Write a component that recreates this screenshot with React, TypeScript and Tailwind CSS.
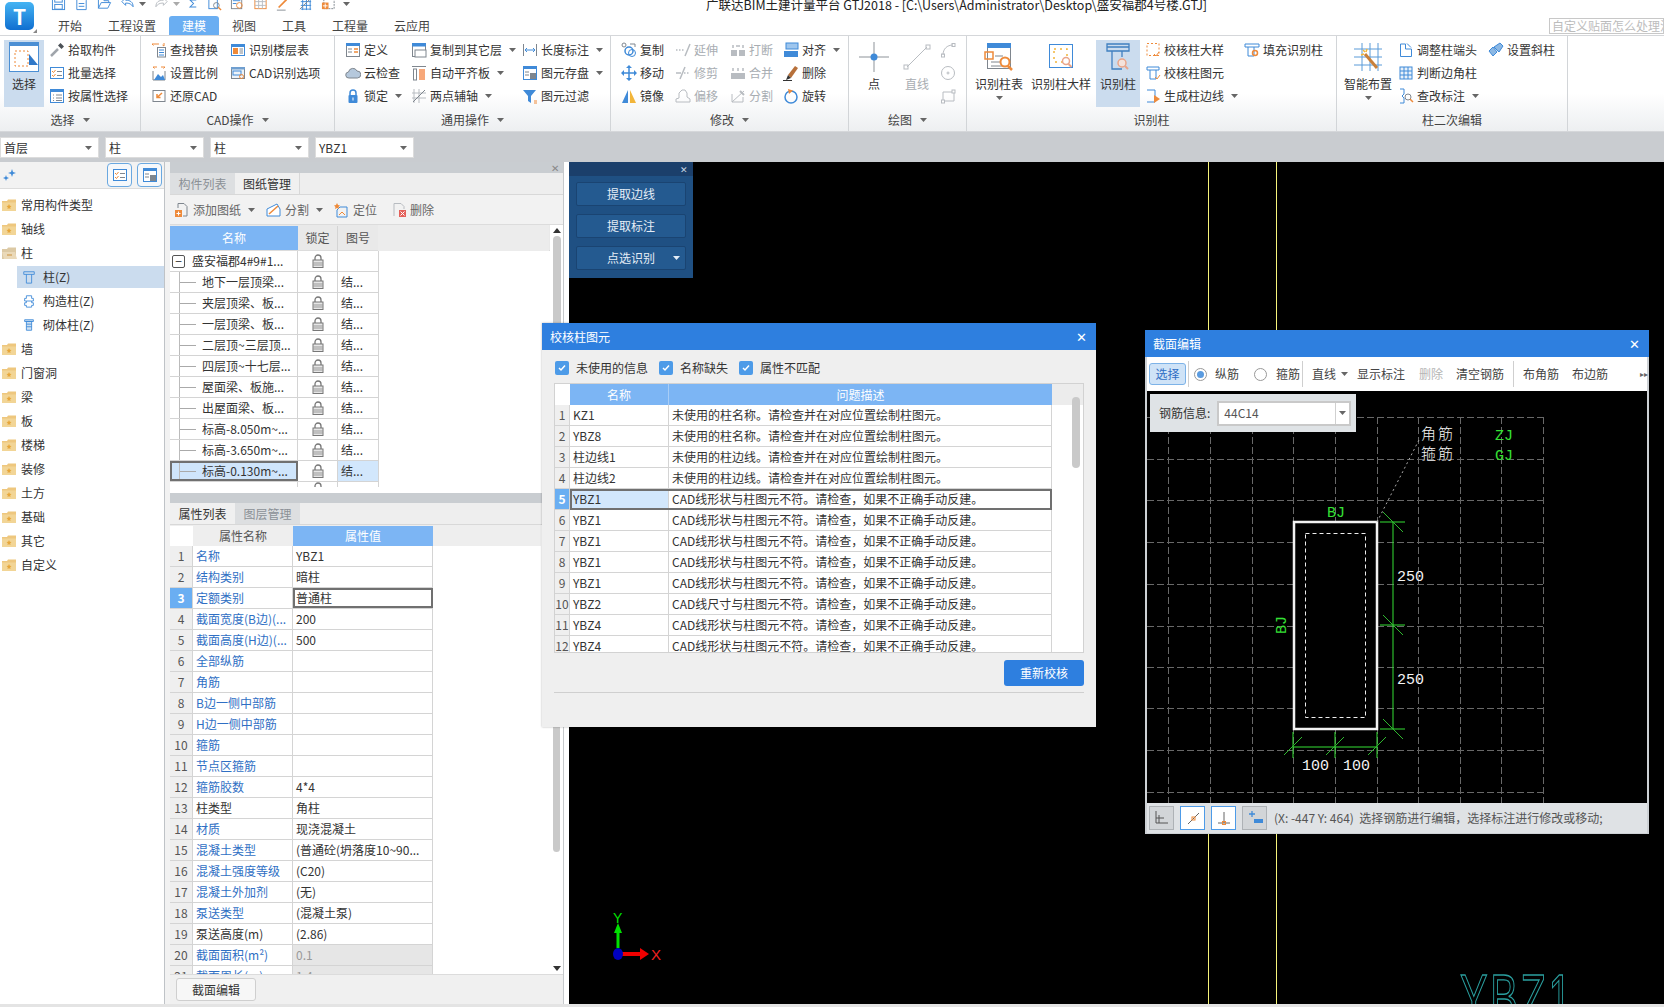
import React from "react";

const B = "#3f8ad8";
const O = "#ee8a3a";
const G = "#7f868e";
const L = "#b8bcc1";
const Y = "#f2b53a";

const icons: Record<string, React.ReactNode> = {
  save: <><rect x="1.5" y="1.5" width="13" height="13" stroke={B} /><rect x="4" y="1.5" width="8" height="5" stroke={B} /><rect x="4" y="9" width="8" height="5" stroke={B} /></>,
  page: <><path d="M3 1.5h7l3 3v10H3z" stroke={B} /><path d="M5 8h6M5 11h6" stroke={B} /></>,
  open: <><path d="M1.5 13V3h5l1 2h5v2" stroke={B} /><path d="M1.5 13l3-6h10l-3 6z" stroke={B} /></>,
  undo: <path d="M2 6l4-4v2.500c5 0 8 2 8 7-2-3-4-4-8-4V10z" stroke={B} />,
  redo: <path d="M14 6l-4-4v2.500c-5 0-8 2-8 7 2-3 4-4 8-4V10z" stroke={L} />,
  sum: <path d="M12 3H3l5 5-5 5h9" stroke={B} strokeWidth="1.500" />,
  q1: <><rect x="2" y="1.500" width="9" height="12" stroke={B} /><circle cx="10" cy="10" r="3" stroke={G} /><path d="M12 12l3 3" stroke={O} strokeWidth="1.500" /></>,
  q2: <><rect x="1.500" y="1.500" width="11" height="12" stroke={G} /><path d="M3 5h8M3 8h4" stroke={B} /><circle cx="10" cy="10" r="3" stroke={O} /></>,
  q3: <><rect x="2" y="1.500" width="12" height="12" stroke={O} /><path d="M2 6h12M2 10h12M6 1.500v12M10 1.500v12" stroke={L} /></>,
  q4: <><path d="M3 12L12 3" stroke={O} strokeWidth="2" /><path d="M1 15h10" stroke={G} /></>,
  q5: <><path d="M3 2h11M3 6h11M3 10h11M3 14h11M5 1v14M9 1v14M13 1v14" stroke={B} /><path d="M2 14L14 2" stroke={G} /></>,
  q6: <><rect x="3" y="1.500" width="11" height="12" stroke={G} strokeDasharray="2 1" /><rect x="1" y="7" width="7" height="7" fill={O} /><path d="M4.500 8v5M2 10.500h5" stroke="#fff" /></>,
  pick: <><path d="M2 14l7-7" stroke="#a0a5ab" strokeWidth="2.500" /><path d="M9 3.500l3.500 3.500L15 4.500 11.500 1z" fill="#4c5157" /></>,
  batch: <><rect x="1.500" y="2.500" width="13" height="11" fill="#fff" stroke={B} /><path d="M3 6l1.500 1.500 2-2.500M3 10l1.500 1.500 2-2.500" stroke={O} /><path d="M8 6.500h5M8 10.500h5" stroke={G} /></>,
  attr: <><rect x="1.500" y="1.500" width="13" height="13" fill="#fff" stroke={B} /><rect x="1" y="1" width="14" height="3" fill={B} /><path d="M4 7h1M7 7h6M4 10h1M7 10h6M4 12.500h1M7 12.500h6" stroke={G} /></>,
  find: <><path d="M1 2h7M1 2l1.500 1.500M13 1v3l-1.500-1" stroke={O} /><rect x="6.500" y="5.500" width="8" height="9.500" fill="#fff" stroke={G} /><path d="M8 8h5M8 10.500h5M8 13h5" stroke={B} /></>,
  floor: <><rect x="1.500" y="2.500" width="13" height="11" fill="#fff" stroke={B} /><rect x="1" y="2" width="14" height="3" fill={B} /><rect x="3" y="6" width="5" height="6" fill={O} /><path d="M9.500 7h3.500M9.500 9h3.500M9.500 11h3.500" stroke={G} /></>,
  scale: <><path d="M2 6v9h12V6" stroke={G} /><path d="M3 15l4-6 3 3 2-2 2 5z" fill={B} /><path d="M2 2h4M10 2h4M2 2l1.500 1.500M14 2l-1.500 1.500" stroke={O} /></>,
  cadopt: <><rect x="1.500" y="2.500" width="13" height="11" fill="#eef3f8" stroke={G} /><rect x="1" y="2" width="14" height="2.500" fill="#6f9fd0" /><rect x="3" y="6" width="8" height="4" stroke={B} /><circle cx="11.500" cy="11.500" r="2" stroke={O} /></>,
  restore: <><rect x="2" y="2.500" width="12" height="11" fill="#fff" stroke={G} /><path d="M11 5L6 9.500M6 6v3.500h3.500" stroke={O} strokeWidth="1.500" /></>,
  define: <><rect x="1.500" y="1.500" width="13" height="13" fill="#fff" stroke={G} /><rect x="1" y="1" width="14" height="3" fill={B} /><path d="M3 7h4M3 10h4" stroke={G} /><path d="M9 7h4M9 10h4" stroke={O} strokeWidth="1.500" /></>,
  cloud: <><path d="M4 13a3 3 0 0 1-.5-6 4.500 4.500 0 0 1 8.500-1 3.500 3.500 0 0 1 .5 7z" fill="#b5c8dc" stroke={G} /></>,
  lock: <><path d="M5 7V5a3 3 0 0 1 6 0v2" stroke={B} strokeWidth="1.500" /><rect x="3.500" y="7" width="9" height="8" rx="1" fill={B} /><rect x="7.500" y="9.500" width="1" height="3" fill="#fff" /></>,
  copyfloor: <><rect x="1.500" y="1.500" width="13" height="13" fill="#fff" stroke={G} /><rect x="1" y="1" width="14" height="3.500" fill={B} /><rect x="4" y="8" width="11" height="7" fill="#fff" stroke={G} /></>,
  align2: <><path d="M1 1.500h14" stroke={G} /><rect x="2.500" y="4" width="3" height="11" stroke={G} /><rect x="8" y="4" width="6" height="11" fill="#f7a87a" /></>,
  twopoint: <><path d="M3 1v14M8 1v14M1 5h14M1 10h14" stroke={L} /><path d="M2 14L14 2" stroke={G} /></>,
  dim: <><path d="M1.500 2v12M14.500 2v12" stroke={G} /><path d="M3 8h10M3 8l2-2M3 8l2 2M13 8l-2-2M13 8l-2 2" stroke={B} /></>,
  store: <><rect x="1.500" y="1.500" width="13" height="13" fill="#fff" stroke={B} /><rect x="1" y="1" width="14" height="3" fill={B} /><path d="M3 7h4M3 10h4" stroke={G} /><rect x="8" y="8" width="6" height="6" fill={G} /></>,
  filter: <><path d="M1 2h13L9 8v7l-3-2V8z" fill={B} /><path d="M12 13h3M12 15h3" stroke={O} /></>,
  copy: <><circle cx="3" cy="3" r="2" stroke={G} /><circle cx="8" cy="9" r="4" stroke={B} strokeWidth="1.500" /><circle cx="11" cy="11" r="3.500" stroke={B} /><path d="M9 2h5v3" stroke={G} /></>,
  move: <><path d="M8 2v12M2 8h12" stroke={B} strokeWidth="1.500" /><path d="M8 0l3 3H5zM8 16l3-3H5zM0 8l3-3v6zM16 8l-3-3v6z" fill={B} /></>,
  mirror: <><path d="M7 2v13H1z" fill={B} /><path d="M9 2v13h6z" fill={Y} /></>,
  extend: <path d="M1 8h1.500M4 8h1.500M7 8h1.500M10 14l5-12" stroke={L} strokeWidth="1.500" />,
  trim: <path d="M1 8h5M9 8h1.500M12 8h1.500M5 14l5-12" stroke={L} strokeWidth="1.500" />,
  split1: <><rect x="1" y="8" width="6" height="6" fill={L} /><rect x="9" y="8" width="6" height="6" fill={L} /><path d="M3 3v3M13 3v3M6 4h4" stroke={L} strokeWidth="1.500" /></>,
  merge: <><rect x="1" y="8" width="14" height="6" fill={L} /><path d="M3 3v3M13 3v3M8 3v3" stroke={L} strokeWidth="1.500" /></>,
  offset: <path d="M1 14v-3l3-1V5l3-3h3l2 3v4l3 2v3z" stroke={L} />,
  split2: <><path d="M2 6v8h11V9" stroke={L} /><path d="M2 14l12-11" stroke={L} /><path d="M10 3l4 4" stroke={L} strokeWidth="2" /></>,
  align3: <><rect x="3" y="1" width="12" height="6" fill="#9ec6ee" stroke={B} /><rect x="1" y="9" width="14" height="6" fill={B} /></>,
  del: <><path d="M5 10l7-9 3 2-7 10z" fill="#b7703a" /><path d="M5 10l3 3-5 2z" fill="#333" /><path d="M0 15.500h9" stroke="#333" /></>,
  rotate: <><circle cx="8" cy="9" r="6" stroke={B} strokeWidth="1.500" /><path d="M5 1l5 1.500L6 6z" fill={O} /></>,
  col1: <><rect x="2" y="1.500" width="12" height="12" stroke={O} strokeDasharray="2 2" /><path d="M9 12l2 2 3-4" stroke={O} /></>,
  col2: <><path d="M2 2h12v3H2zM5 5v9h6V5" stroke={B} /><path d="M10 12l2 2 3-4" stroke={O} /></>,
  col3: <><path d="M2 2h8v12H2" stroke={B} /><path d="M9 7l6 4-6 4z" fill={O} /></>,
  col4: <><path d="M1 2h14v3H1zM4 5v9h6V5" stroke={B} /><circle cx="11" cy="11" r="2.500" stroke={O} strokeWidth="1.500" /></>,
  end: <path d="M2.500 2h5v5h6v7.500h-11z M9 1.500l4 4" stroke={B} />,
  corner: <><rect x="2" y="2" width="12" height="12" fill="#e8f1fa" stroke={B} /><path d="M2 6h12M2 10h12M6 2v12M10 2v12" stroke={B} /></>,
  mark: <><path d="M2 1h4v5l-2 2 2 2v5H2" stroke={B} /><circle cx="10" cy="9" r="3" stroke={G} /><path d="M12 11l3 3" stroke={O} strokeWidth="1.500" /></>,
  tilt: <><path d="M1 9l4 5 4-4-4-5zM6 5l5 5 4-6-3-3z" fill="#8cb8e4" stroke={B} /></>,
  arc: <><path d="M3 13C3 7 7 3 13 3" stroke={L} /><rect x="1.500" y="12" width="3" height="3" stroke={L} /><rect x="12" y="1.500" width="3" height="3" stroke={L} /></>,
  circle: <><circle cx="8" cy="8" r="6.500" stroke={L} /><circle cx="8" cy="8" r="1" stroke={L} /></>,
  rect: <><path d="M3 4h11v9H3z" stroke={L} /><rect x="12" y="2" width="3" height="3" fill="#fff" stroke={L} /><rect x="1.500" y="12" width="3" height="3" fill="#fff" stroke={L} /></>,
  add: <><path d="M4 6V1.500h6l3 3V14H9" stroke={G} /><rect x="1" y="8" width="7" height="7" fill={O} /><path d="M4.500 9.500v4M2.500 11.500h4" stroke="#fff" /></>,
  cut: <><path d="M1 7l10-5 3 5v7H1z" fill="#fff" stroke={B} /><path d="M3 12l9-8" stroke={O} strokeWidth="1.500" /></>,
  locate: <><path d="M6 5h7v10H3V8z" stroke={B} /><path d="M3 1l1 2 2 .500-1.500 1.500.500 2L3 6 1 7l.500-2L0 3.500 2 3z" fill={O} /><path d="M5 13l3-3 3 3" stroke={O} /></>,
  remove: <><path d="M3 14V1.500h7l3 3V7" stroke={L} /><rect x="8" y="8" width="7" height="7" fill="#e4605a" /><path d="M9.500 9.500l4 4M13.500 9.500l-4 4" stroke="#fff" /></>,
  c1: <path d="M2 2h12v3H2zM5 5v10h6V5" stroke={B} />,
  c2: <><path d="M5 2h6v3h2v3h-2v2h2v3h-2v2H5v-2H3v-3h2V8H3V5h2z" stroke={B} /><path d="M5 8h6" stroke={B} /></>,
  c3: <><path d="M3 2h10v2H3zM5 4v10h6V4z" fill="#cfe1f3" stroke={B} /><path d="M5 7h6M5 10h6" stroke={B} /></>,
  l1: <><path d="M2 1v12h12" stroke="#555" /><path d="M5 5v8M2 8h8" stroke="#555" /></>,
  l2: <><path d="M3 14L14 3" stroke="#666" /><rect x="7" y="7" width="3" height="3" stroke={O} /></>,
  l3: <><path d="M8 2v11M2 13h12" stroke="#666" /><rect x="6.500" y="11.500" width="3" height="3" stroke={O} /></>,
  l4: <><path d="M5 1v6M2 4h6" stroke={B} strokeWidth="1.300" /><rect x="7" y="9" width="9" height="4" fill={B} /></>,
};

const Ico = ({ n, s = 16 }: { n: string; s?: number }) => (
  <svg width={s} height={s} viewBox="0 0 16 16" fill="none" className="shrink-0">
    {icons[n]}
  </svg>
);

const Caret = ({ c = "#666" }: { c?: string }) => (
  <svg width="7" height="4" viewBox="0 0 7 4" className="shrink-0">
    <path d="M0 0h7L3.500 4z" fill={c} />
  </svg>
);

const Item = ({ n, t, caret, off }: { n: string; t: string; caret?: boolean; off?: boolean }) => (
  <div className={`flex h-[23px] items-center whitespace-nowrap ${off ? "text-[#a8adb2]" : "text-[#333]"}`}>
    <span className="w-[19px] shrink-0">
      <Ico n={n} />
    </span>
    {t}
    {caret && (
      <span className="ml-[7px]">
        <Caret />
      </span>
    )}
  </div>
);

const Group = ({ label, caret, className, children }: { label: string; caret?: boolean; className: string; children: React.ReactNode }) => (
  <div className={`flex shrink-0 flex-col border-r border-[#d2d5d8] ${className}`}>
    <div className="flex h-[71px] pt-[2px]">{children}</div>
    <div className="mt-[1px] flex h-[23px] items-center justify-center gap-[8px] text-[#444]">
      {label}
      {caret && <Caret />}
    </div>
  </div>
);

const Big = ({ t, className, active, caret, off, children }: { t: string; className: string; active?: boolean; caret?: boolean; off?: boolean; children: React.ReactNode }) => (
  <div className={`mt-[2px] flex h-[67px] shrink-0 flex-col items-center whitespace-nowrap pt-[2px] ${active ? "bg-[#cbdcee]" : ""} ${off ? "text-[#a8adb2]" : "text-[#333]"} ${className}`}>
    <div className="flex h-[30px] items-center">{children}</div>
    <div className="mt-[3px] h-[18px] leading-[18px]">{t}</div>
    {caret && (
      <div className="mt-[3px]">
        <Caret />
      </div>
    )}
  </div>
);

const Combo = ({ t }: { t: string }) => (
  <div className="flex h-[21px] w-[99px] items-center justify-between border border-[#dcdcdc] bg-white pl-[3px] pr-[6px] text-[#333]">
    {t}
    <Caret />
  </div>
);

const Folder = ({ open }: { open?: boolean }) => (
  <svg width="15" height="13" viewBox="0 0 15 13" className="shrink-0">
    <path d="M0 2h5l1-1.500h8V12H0z" fill={open ? "#dcc9a4" : "#eec77e"} />
    <path d={open ? "M0 5h13l2 7H2z" : "M0 3.500h14V12H0z"} fill={open ? "#ead9b9" : "#f2d596"} />
    {open ? <rect x="5" y="7.500" width="5" height="1" fill="#c98f3c" /> : <path d="M7 5l.8 1.700 1.700.3-1.300 1.200.3 1.800L7 9.200 5.500 10l.3-1.800L4.500 7l1.700-.3z" fill="#e6a63a" />}
  </svg>
);

const treeRows: { t: string; i?: string; sel?: boolean; open?: boolean }[] = [
  { t: "常用构件类型" },
  { t: "轴线" },
  { t: "柱", open: true },
  { t: "柱(Z)", i: "c1", sel: true },
  { t: "构造柱(Z)", i: "c2" },
  { t: "砌体柱(Z)", i: "c3" },
  { t: "墙" },
  { t: "门窗洞" },
  { t: "梁" },
  { t: "板" },
  { t: "楼梯" },
  { t: "装修" },
  { t: "土方" },
  { t: "基础" },
  { t: "其它" },
  { t: "自定义" },
];

const LockIcon = () => (
  <svg width="12" height="14" viewBox="0 0 12 14" fill="none">
    <path d="M3 6V4a3 3 0 0 1 6 0v2" stroke="#777" strokeWidth="1.300" />
    <rect x="1" y="6" width="10" height="7.500" fill="#e6e6e6" stroke="#777" />
    <path d="M1 9h10M1 11h10" stroke="#999" />
  </svg>
);

const drawings = [
  "地下一层顶梁...",
  "夹层顶梁、板...",
  "一层顶梁、板...",
  "二层顶~三层顶...",
  "四层顶~十七层...",
  "屋面梁、板施...",
  "出屋面梁、板...",
  "标高-8.050m~...",
  "标高-3.650m~...",
  "标高-0.130m~...",
];

const props: [string, string, boolean?][] = [
  ["名称", "YBZ1"],
  ["结构类别", "暗柱"],
  ["定额类别", "普通柱"],
  ["截面宽度(B边)(...", "200"],
  ["截面高度(H边)(...", "500"],
  ["全部纵筋", ""],
  ["角筋", ""],
  ["B边一侧中部筋", ""],
  ["H边一侧中部筋", ""],
  ["箍筋", ""],
  ["节点区箍筋", ""],
  ["箍筋胶数", "4*4"],
  ["柱类型", "角柱", true],
  ["材质", "现浇混凝土"],
  ["混凝土类型", "(普通砼(坍落度10~90..."],
  ["混凝土强度等级", "(C20)"],
  ["混凝土外加剂", "(无)"],
  ["泵送类型", "(混凝土泵)"],
  ["泵送高度(m)", "(2.86)", true],
  ["截面面积(m²)", "0.1"],
  ["截面周长(m)", "1.4"],
];

const shape = "CAD线形状与柱图元不符。请检查，如果不正确手动反建。";
const unusedName = "未使用的柱名称。请检查并在对应位置绘制柱图元。";
const unusedLine = "未使用的柱边线。请检查并在对应位置绘制柱图元。";
const checks: [string, string][] = [
  ["KZ1", unusedName],
  ["YBZ8", unusedName],
  ["柱边线1", unusedLine],
  ["柱边线2", unusedLine],
  ["YBZ1", shape],
  ["YBZ1", shape],
  ["YBZ1", shape],
  ["YBZ1", shape],
  ["YBZ1", shape],
  ["YBZ2", "CAD线尺寸与柱图元不符。请检查，如果不正确手动反建。"],
  ["YBZ4", shape],
  ["YBZ4", shape],
];

const Check = ({ t, className }: { t: string; className: string }) => (
  <div className={`flex items-center gap-[7px] ${className}`}>
    <span className="flex h-[14px] w-[14px] items-center justify-center rounded-[2px] bg-[#4d9be8]">
      <svg width="10" height="10" viewBox="0 0 10 10" fill="none">
        <path d="M2 5l2 2 4-4.500" stroke="#fff" strokeWidth="1.500" />
      </svg>
    </span>
    {t}
  </div>
);

const gridX = [1168, 1210, 1252, 1293, 1335, 1377, 1418, 1460, 1501, 1543];
const gridY = [417, 459, 500, 542, 584, 626, 667, 708, 750, 792];

const SectionDrawing = () => {
  const green = "#35e035";
  const slash = (x: number, y: number, d = 13) => (
    <path d={`M${x - d} ${y - d}L${x + d} ${y + d}`} stroke="#2fb82f" />
  );
  const slash2 = (x: number, y: number, d = 13) => (
    <path d={`M${x - d} ${y + d}L${x + d} ${y - d}`} stroke="#2fb82f" />
  );
  return (
    <svg width="500" height="412" viewBox="1147 391 500 412" className="absolute inset-0">
      {gridX.map((x) => (
        <path key={x} d={`M${x}.5 417V803`} stroke="#686868" strokeDasharray="7 3" />
      ))}
      {gridY.map((y) => (
        <path key={y} d={`M1147 ${y}.5H1543`} stroke="#686868" strokeDasharray="7 3" />
      ))}
      <rect x="1294" y="522" width="83" height="207" stroke="#f2f2f2" strokeWidth="2.500" />
      <rect x="1305.500" y="533.500" width="60" height="184" stroke="#eee" strokeDasharray="4 3" />
      <path d="M1377 522L1420 438" stroke="#aaa" strokeDasharray="2 3" />
      <path d="M1393 522V729M1380 522H1405M1380 625H1405M1380 729H1405" stroke={green} />
      {slash(1393, 522, 10)}
      {slash(1393, 625, 10)}
      {slash(1393, 729, 10)}
      <path d="M1293 747H1377M1293 732V758M1335 732V758M1377 732V758" stroke={green} />
      {slash2(1293, 746, 9)}
      {slash2(1335, 746, 9)}
      {slash2(1377, 746, 9)}
      <g className="font-['Liberation_Mono','Noto_Sans_CJK_SC',monospace] text-[15px] font-light" fill="#f4f4f4">
        <text x="1397" y="581">250</text>
        <text x="1397" y="684">250</text>
        <text x="1302" y="770">100</text>
        <text x="1343" y="770">100</text>
      </g>
      <g className="font-['Noto_Sans_CJK_SC',sans-serif] text-[15px] font-light" fill="#f4f4f4" letterSpacing="2">
        <text x="1421" y="439">角筋</text>
        <text x="1421" y="459">箍筋</text>
      </g>
      <g className="font-['Liberation_Mono',monospace] text-[15px]" fill={green}>
        <text x="1495" y="440">ZJ</text>
        <text x="1495" y="460">GJ</text>
        <text x="1327" y="517">BJ</text>
        <text transform="translate(1286 634) rotate(-90)">BJ</text>
      </g>
    </svg>
  );
};

export default function App() {
  return (
    <div className="relative flex h-[1007px] w-[1664px] flex-col overflow-hidden bg-white font-['Noto_Sans_CJK_SC','Noto_Sans',sans-serif] text-[12px] leading-none text-[#333]">
      {/* title + tabs */}
      <div className="relative flex h-[35px] shrink-0">
        <div className="relative w-[45px] shrink-0 pl-[5px] pt-[2px]">
          <div className="flex h-[28px] w-[29px] items-center justify-center rounded-[5px] bg-gradient-to-b from-[#45b4f3] to-[#0f6fd0] text-[21px] font-bold text-white">T</div>
          <svg width="4" height="4" viewBox="0 0 4 4" className="absolute left-[33px] top-[29px]"><path d="M4 0v4H0z" fill="#888" /></svg>
        </div>
        <div className="flex min-w-0 flex-1 flex-col">
          <div className="flex h-[16px] items-start gap-[8px] overflow-hidden pl-[6px]">
            <div className="-mt-[4px] flex items-center gap-[8px]">
              <Ico n="save" s={15} />
              <Ico n="page" s={15} />
              <Ico n="open" s={15} />
              <Ico n="undo" s={15} />
              <span className="-ml-[4px]"><Caret /></span>
              <Ico n="redo" s={15} />
              <span className="-ml-[4px]"><Caret c="#aaa" /></span>
              <Ico n="sum" s={11} />
              <Ico n="q1" s={15} />
              <Ico n="q2" s={15} />
              <Ico n="q3" s={15} />
              <Ico n="q4" s={14} />
              <Ico n="q5" s={15} />
              <Ico n="q6" s={15} />
              <span className="-ml-[1px]"><Caret /></span>
            </div>
          </div>
          <div className="flex h-[19px] items-center pr-0">
            {["开始", "工程设置", "建模", "视图", "工具", "工程量", "云应用"].map((t) => (
              <div key={t} className={`flex h-[19px] items-center px-[13px] ${t === "建模" ? "rounded-t-[3px] bg-[#6aaef2] text-white" : "text-[#444]"}`}>
                {t}
              </div>
            ))}
            <div className="ml-auto h-[16px] w-[115px] overflow-hidden whitespace-nowrap border border-[#c8c8c8] pl-[2px] text-[#bcbcbc] leading-[14px]">自定义贴面怎么处理混凝土</div>
          </div>
        </div>
        <div className="absolute left-[706px] -top-[3px] whitespace-nowrap text-[12.500px] leading-[16px] text-[#222]">
          广联达BIM土建计量平台 GTJ2018 - [C:\Users\Administrator\Desktop\盛安福郡4号楼.GTJ]
        </div>
      </div>

      {/* ribbon */}
      <div className="flex h-[97px] shrink-0 border-y border-[#d5d7da] bg-gradient-to-b from-white from-60% to-[#edeff1]">
        <Group label="选择" caret className="w-[141px]">
          <Big t="选择" active className="ml-[4px] w-[40px]">
            <svg width="30" height="30" viewBox="0 0 30 30" fill="none">
              <rect x="0.500" y="0.500" width="29" height="29" fill="#fff" stroke="#4b8fd4" />
              <rect x="0" y="0" width="30" height="4" fill="#4b8fd4" />
              <rect x="6" y="9" width="13" height="15" stroke={O} strokeDasharray="2 2" />
              <path d="M20 12l9 11H20z" fill="#2f78c8" />
            </svg>
          </Big>
          <div className="ml-[5px]">
            <Item n="pick" t="拾取构件" />
            <Item n="batch" t="批量选择" />
            <Item n="attr" t="按属性选择" />
          </div>
        </Group>
        <Group label="CAD操作" caret className="w-[194px]">
          <div className="ml-[10px] w-[79px]">
            <Item n="find" t="查找替换" />
            <Item n="scale" t="设置比例" />
            <Item n="restore" t="还原CAD" />
          </div>
          <div>
            <Item n="floor" t="识别楼层表" />
            <Item n="cadopt" t="CAD识别选项" />
          </div>
        </Group>
        <Group label="通用操作" caret className="w-[276px]">
          <div className="ml-[10px] w-[66px]">
            <Item n="define" t="定义" />
            <Item n="cloud" t="云检查" />
            <Item n="lock" t="锁定" caret />
          </div>
          <div className="w-[111px]">
            <Item n="copyfloor" t="复制到其它层" caret />
            <Item n="align2" t="自动平齐板" caret />
            <Item n="twopoint" t="两点辅轴" caret />
          </div>
          <div>
            <Item n="dim" t="长度标注" caret />
            <Item n="store" t="图元存盘" caret />
            <Item n="filter" t="图元过滤" />
          </div>
        </Group>
        <Group label="修改" caret className="w-[238px]">
          <div className="ml-[10px] w-[54px]">
            <Item n="copy" t="复制" />
            <Item n="move" t="移动" />
            <Item n="mirror" t="镜像" />
          </div>
          <div className="w-[55px]">
            <Item n="extend" t="延伸" off />
            <Item n="trim" t="修剪" off />
            <Item n="offset" t="偏移" off />
          </div>
          <div className="w-[53px]">
            <Item n="split1" t="打断" off />
            <Item n="merge" t="合并" off />
            <Item n="split2" t="分割" off />
          </div>
          <div>
            <Item n="align3" t="对齐" caret />
            <Item n="del" t="删除" />
            <Item n="rotate" t="旋转" />
          </div>
        </Group>
        <Group label="绘图" caret className="w-[118px]">
          <Big t="点" className="ml-[3px] w-[44px]">
            <svg width="30" height="30" viewBox="0 0 30 30" fill="none">
              <path d="M15 0v30M0 15h30" stroke="#8d9399" />
              <circle cx="15" cy="15" r="3.500" fill={B} />
            </svg>
          </Big>
          <Big t="直线" off className="w-[42px]">
            <svg width="30" height="30" viewBox="0 0 30 30" fill="none">
              <path d="M5 25L25 5" stroke={L} />
              <rect x="2" y="23" width="4" height="4" stroke={L} />
              <rect x="24" y="3" width="4" height="4" stroke={L} />
            </svg>
          </Big>
          <div className="ml-[2px] flex flex-col">
            <div className="flex h-[23px] items-center"><Ico n="arc" /></div>
            <div className="flex h-[23px] items-center"><Ico n="circle" /></div>
            <div className="flex h-[23px] items-center"><Ico n="rect" /></div>
          </div>
        </Group>
        <Group label="识别柱" className="w-[370px]">
          <Big t="识别柱表" caret className="ml-[8px] w-[48px]">
            <svg width="30" height="30" viewBox="0 0 30 30" fill="none">
              <rect x="3.500" y="1.500" width="23" height="25" fill="#fff" stroke={G} />
              <rect x="3" y="1" width="24" height="5" fill={B} />
              <rect x="1" y="10" width="8" height="7" stroke={O} strokeWidth="1.500" />
              <path d="M11 14h8M7 20h10M7 24h12" stroke={G} />
              <circle cx="21" cy="20" r="4.500" fill="#fff" stroke={O} strokeWidth="2" />
              <path d="M24 24l4 4" stroke={O} strokeWidth="2.500" />
            </svg>
          </Big>
          <Big t="识别柱大样" className="ml-[8px] w-[60px]">
            <svg width="30" height="30" viewBox="0 0 30 30" fill="none">
              <rect x="3.500" y="2.500" width="23" height="23" stroke={B} />
              <rect x="8" y="7" width="13" height="13" stroke={Y} strokeWidth="1.500" strokeDasharray="2 4" />
              <circle cx="20" cy="19" r="3.500" fill="#fff" stroke="#e9a58a" strokeWidth="1.500" />
              <path d="M22.500 22l3 3" stroke="#e9a58a" strokeWidth="2" />
            </svg>
          </Big>
          <Big t="识别柱" active className="ml-[5px] w-[44px]">
            <svg width="30" height="30" viewBox="0 0 30 30" fill="none">
              <path d="M4 2h22v7H4zM4 5h22M9 9v18h10" stroke="#3f7fc0" strokeWidth="1.300" />
              <path d="M19 9v6" stroke="#3f7fc0" strokeWidth="1.300" />
              <circle cx="19" cy="21" r="4" fill="#f4e3dc" stroke="#e9a58a" strokeWidth="1.500" />
              <path d="M22 24l3 3" stroke="#e9a58a" strokeWidth="2" />
            </svg>
          </Big>
          <div className="ml-[5px] w-[99px]">
            <Item n="col1" t="校核柱大样" />
            <Item n="col2" t="校核柱图元" />
            <Item n="col3" t="生成柱边线" caret />
          </div>
          <div>
            <Item n="col4" t="填充识别柱" />
          </div>
        </Group>
        <Group label="柱二次编辑" className="w-[231px]">
          <Big t="智能布置" caret className="ml-[7px] w-[48px]">
            <svg width="30" height="30" viewBox="0 0 30 30" fill="none">
              <path d="M1 7h28M1 15h28M1 23h28M9 1v28M17 1v28M25 1v28" stroke="#5b9bd8" />
              <path d="M12 12l12 14" stroke="#c9803a" strokeWidth="3" />
              <path d="M10 8l2 2M14 7l-1 3M8 13l3-1" stroke={Y} strokeWidth="1.500" />
            </svg>
          </Big>
          <div className="ml-[6px] w-[90px]">
            <Item n="end" t="调整柱端头" />
            <Item n="corner" t="判断边角柱" />
            <Item n="mark" t="查改标注" caret />
          </div>
          <div>
            <Item n="tilt" t="设置斜柱" />
          </div>
        </Group>
      </div>

      {/* combo bar */}
      <div className="flex h-[30px] shrink-0 gap-[6px] bg-[#c9ccd0] pt-[5px]">
        <Combo t="首层" />
        <Combo t="柱" />
        <Combo t="柱" />
        <Combo t="YBZ1" />
      </div>

      {/* main */}
      <div className="flex min-h-0 flex-1">
        <aside className="flex w-[165px] shrink-0 flex-col border-r border-[#bfc3c7]">
          <div className="flex h-[27px] shrink-0 items-center border-b border-[#dcdcdc] bg-[#f2f2f2] pl-[3px] pr-[2px]">
            <svg width="14" height="14" viewBox="0 0 14 14" fill={B}>
              <path d="M9 1l1 3 3 1-3 1-1 3-1-3-3-1 3-1zM3 7l.7 2L6 10l-2.300 1L3 13l-.7-2L0 10l2.300-1z" />
            </svg>
            <div className="ml-auto flex gap-[5px]">
              <div className="flex h-[24px] w-[25px] items-center justify-center rounded-[4px] border border-[#6aa8e0] bg-[#f5f8fb]"><Ico n="batch" /></div>
              <div className="flex h-[24px] w-[25px] items-center justify-center rounded-[4px] border border-[#6aa8e0] bg-[#f5f8fb]"><Ico n="store" /></div>
            </div>
          </div>
          <div className="pt-[4px]">
            {treeRows.map((r) => (
              <div key={r.t} className={`flex h-[24px] items-center ${r.i ? "pl-[17px]" : "pl-[2px]"}`}>
                {r.i ? (
                  <div className={`flex h-[22px] flex-1 items-center gap-[7px] pl-[5px] ${r.sel ? "bg-[#cbdcee]" : ""}`}>
                    <Ico n={r.i} s={14} />
                    {r.t}
                  </div>
                ) : (
                  <div className="flex items-center gap-[4px]">
                    <Folder open={r.open} />
                    {r.t}
                  </div>
                )}
              </div>
            ))}
          </div>
        </aside>

        <div className="w-[5px] shrink-0 bg-[#f2f2f2]" />

        <div className="flex w-[399px] shrink-0 flex-col pr-[5px]">
          {/* upper panel */}
          <div className="flex h-[325px] shrink-0 flex-col overflow-hidden border-r border-[#c6c9cc] bg-white">
            <div className="flex h-[11px] shrink-0 items-center justify-end bg-[#c9cdd1] pr-[4px]">
              <span className="text-[10px] leading-[10px] text-[#888]">✕</span>
            </div>
            <div className="flex h-[22px] shrink-0 border-b border-[#d8d8d8] bg-[#eeeeee]">
              <div className="flex w-[65px] items-center justify-center bg-[#dddfe1] text-[#8b9096]">构件列表</div>
              <div className="flex w-[65px] items-center justify-center border-r border-[#d8d8d8] bg-[#f0f0f0] text-[#333]">图纸管理</div>
            </div>
            <div className="flex h-[30px] shrink-0 items-center border-b border-[#dcdcdc] bg-[#f2f2f2] pl-[4px] text-[#666]">
              <Ico n="add" />
              <span className="ml-[3px]">添加图纸</span>
              <span className="ml-[7px]"><Caret /></span>
              <span className="ml-[11px]"><Ico n="cut" /></span>
              <span className="ml-[3px]">分割</span>
              <span className="ml-[7px]"><Caret /></span>
              <span className="ml-[11px]"><Ico n="locate" /></span>
              <span className="ml-[3px]">定位</span>
              <span className="ml-[14px]"><Ico n="remove" /></span>
              <span className="ml-[3px]">删除</span>
            </div>
            <div className="relative min-h-0 flex-1 overflow-hidden">
              <div className="flex h-[26px] w-[380px] border-b border-[#dcdcdc] bg-[#e9e9e9] pt-px">
                <div className="flex w-[128px] items-center justify-center bg-[#7cb5f4] text-white">名称</div>
                <div className="flex w-[40px] items-center justify-center border-r border-[#d4d4d4] text-[#555]">锁定</div>
                <div className="flex w-[41px] items-center justify-center border-r border-[#d4d4d4] text-[#555]">图号</div>
              </div>
              <div className="absolute right-[14px] top-0 h-[26px] w-[171px] bg-[#ececec]" />
              <div className="flex h-[21px] w-[209px] border-b border-[#d4d4d4]">
                <div className="flex w-[128px] items-center whitespace-nowrap border-r border-[#d4d4d4] pl-[2px]">
                  <span className="mr-[7px] flex h-[13px] w-[13px] items-center justify-center rounded-[2px] border border-[#555] pb-[1px]">−</span>
                  盛安福郡4#9#1...
                </div>
                <div className="flex w-[40px] items-center justify-center border-r border-[#d4d4d4]"><LockIcon /></div>
                <div className="w-[41px] border-r border-[#d4d4d4]" />
              </div>
              {drawings.map((t, i) => {
                const sel = i === drawings.length - 1;
                return (
                  <div key={t} className="flex h-[21px] w-[209px] border-b border-[#d4d4d4]">
                    <div className={`relative flex w-[128px] items-center whitespace-nowrap ${sel ? "border-2 border-[#707070] bg-[#cfe5fb] pl-[30px]" : "border-r border-[#d4d4d4] pl-[32px]"}`}>
                      <span className={`absolute top-1/2 h-px w-[17px] bg-[#aaa] ${sel ? "left-[7px]" : "left-[9px]"}`} />
                      <span className={`absolute inset-y-0 w-px bg-[#bbb] ${sel ? "left-[7px]" : "left-[9px]"}`} />
                      {t}
                    </div>
                    <div className="flex w-[40px] items-center justify-center border-r border-[#d4d4d4]"><LockIcon /></div>
                    <div className={`flex w-[41px] items-center border-r border-[#d4d4d4] pl-[3px] ${sel ? "bg-[#d2e7fc]" : ""}`}>结...</div>
                  </div>
                );
              })}
              <div className="flex h-[21px] w-[209px]">
                <div className="w-[128px] border-r border-[#d4d4d4]" />
                <div className="flex w-[40px] justify-center border-r border-[#d4d4d4]"><LockIcon /></div>
                <div className="w-[41px] border-r border-[#d4d4d4]" />
              </div>
              <div className="absolute inset-y-0 right-0 flex w-[13px] flex-col items-center bg-white pt-[3px]">
                <svg width="8" height="5" viewBox="0 0 8 5"><path d="M4 0l4 5H0z" fill="#333" /></svg>
                <div className="mt-[3px] h-[215px] w-[8px] rounded-[4px] bg-[#c9c9c9]" />
              </div>
            </div>
          </div>

          <div className="h-[6px] shrink-0 bg-white" />

          {/* lower panel */}
          <div className="flex min-h-0 flex-1 flex-col overflow-hidden border-r border-[#c6c9cc] bg-white">
            <div className="h-[10px] shrink-0 bg-[#c9cdd1]" />
            <div className="flex h-[22px] shrink-0 border-b border-[#d8d8d8] bg-[#eeeeee]">
              <div className="flex w-[65px] items-center justify-center bg-[#f0f0f0] text-[#333]">属性列表</div>
              <div className="flex w-[65px] items-center justify-center bg-[#dddfe1] text-[#8b9096]">图层管理</div>
            </div>
            <div className="relative min-h-0 flex-1 overflow-hidden">
              <div className="flex h-[21px] w-[371px] bg-[#eeeeee] pt-px">
                <div className="w-[23px] bg-white" />
                <div className="flex w-[100px] items-center justify-center text-[#555]">属性名称</div>
                <div className="flex w-[140px] items-center justify-center bg-[#7cb5f4] text-white">属性值</div>
              </div>
              {props.map(([name, val, plain], i) => {
                const gray = i >= 19;
                const active = i === 2;
                return (
                  <div key={name} className="flex h-[21px] w-[263px] border-b border-[#d4d4d4]">
                    <div className={`flex w-[23px] items-center justify-center border-r border-[#d4d4d4] ${active ? "bg-[#6aaef2] font-bold text-white" : "bg-[#efefef] text-[#555]"}`}>{i + 1}</div>
                    <div className={`flex w-[100px] items-center overflow-hidden whitespace-nowrap border-r border-[#d4d4d4] pl-[3px] ${plain ? "text-[#333]" : "text-[#2f6fc4]"}`}>{name}</div>
                    <div className={`flex w-[140px] items-center whitespace-nowrap ${active ? "border-2 border-[#707070] pl-[1px]" : "border-r border-[#d4d4d4] pl-[3px]"} ${gray ? "bg-[#e6e6e6] text-[#999]" : ""}`}>{val}</div>
                  </div>
                );
              })}
              <div className="absolute inset-y-0 right-0 flex w-[13px] flex-col items-center justify-between bg-white pb-[3px]">
                <div className="mt-[10px] h-[317px] w-[7px] rounded-[4px] bg-[#c9c9c9]" />
                <svg width="8" height="5" viewBox="0 0 8 5"><path d="M4 5l4-5H0z" fill="#333" /></svg>
              </div>
            </div>
            <div className="h-[30px] shrink-0 border-t border-[#dcdcdc] bg-[#f0f0f0] pl-[6px] pt-[3px]">
              <div className="flex h-[23px] w-[80px] items-center justify-center rounded-[3px] border border-[#cfcfcf] bg-[#f7f7f7]">截面编辑</div>
            </div>
          </div>
        </div>

        {/* CAD canvas */}
        <div className="relative min-w-0 flex-1 overflow-hidden bg-black">
          <svg width="1095" height="842" viewBox="569 162 1095 842" className="absolute inset-0">
            <path d="M1208.500 162V1004M1276.500 162V1004" stroke="#f6f37a" />
            <path d="M618 948V931" stroke="#00e000" strokeWidth="3" />
            <path d="M618 923l4 10h-8z" fill="#00e000" />
            <path d="M622 954h18" stroke="#f00000" strokeWidth="4" />
            <path d="M649 954l-9-6v12z" fill="#f00000" />
            <ellipse cx="618" cy="954" rx="5" ry="6" fill="#0000c0" />
            <text x="613" y="923" fill="#00e000" className="font-['Liberation_Sans',sans-serif] text-[14px]">Y</text>
            <text x="651" y="960" fill="#f02020" className="font-['Liberation_Sans',sans-serif] text-[15px]">X</text>
            <text transform="translate(1460 1020) scale(0.900 1.400)" fill="none" stroke="#2a9e9e" letterSpacing="3" className="font-['Liberation_Sans',sans-serif] text-[46px]">YBZ1</text>
          </svg>
        </div>
      </div>

      <div className="h-[3px] shrink-0 bg-[#e4e4e4]" />

      {/* floating pick panel */}
      <div className="absolute left-[569px] top-[162px] flex h-[116px] w-[124px] flex-col bg-[#1f5083] text-[#e4edf6]">
        <div className="flex h-[14px] items-center justify-end bg-[#1b3f6b] pr-[5px] text-[9px] leading-[9px] text-[#c9d6e4]">✕</div>
        <div className="flex flex-col gap-[8px] px-[7px] pt-[6px]">
          <div className="flex h-[24px] items-center justify-center rounded-[2px] border border-[#1a4472] bg-[#245a90]">提取边线</div>
          <div className="flex h-[24px] items-center justify-center rounded-[2px] border border-[#1a4472] bg-[#245a90]">提取标注</div>
          <div className="relative flex h-[24px] items-center justify-center rounded-[2px] border border-[#1a4472] bg-[#245a90]">
            点选识别
            <span className="absolute right-[5px] top-[9px]"><Caret c="#e4edf6" /></span>
          </div>
        </div>
      </div>

      {/* check dialog */}
      <div className="absolute left-[542px] top-[323px] flex h-[404px] w-[554px] flex-col bg-[#efefef] shadow-[0_0_2px_rgba(0,0,0,0.3)]">
        <div className="flex h-[27px] shrink-0 items-center justify-between bg-[#2e7fdf] pl-[8px] pr-[9px] text-white">
          校核柱图元
          <span className="text-[13px]">✕</span>
        </div>
        <div className="flex h-[33px] shrink-0 items-center pl-[13px] pt-[3px]">
          <Check t="未使用的信息" className="w-[104px]" />
          <Check t="名称缺失" className="w-[80px]" />
          <Check t="属性不匹配" className="w-[100px]" />
        </div>
        <div className="relative mx-[12px] h-[270px] shrink-0 overflow-hidden border border-[#d2d2d2] bg-white">
          <div className="flex h-[21px] bg-[#ececec]">
            <div className="w-[15px] bg-white" />
            <div className="flex w-[99px] items-center justify-center border-r border-[#a8cdf6] bg-[#7cb5f4] text-white">名称</div>
            <div className="flex w-[383px] items-center justify-center bg-[#7cb5f4] text-white">问题描述</div>
            <div className="w-[18px]" />
          </div>
          {checks.map(([name, desc], i) => {
            const sel = i === 4;
            return (
              <div key={i} className="relative flex h-[21px] w-[497px] border-b border-[#d4d4d4]">
                <div className={`flex w-[15px] shrink-0 items-center justify-center border-r border-[#d4d4d4] ${sel ? "bg-[#6aaef2] font-bold text-white" : "bg-[#efefef] text-[#555]"}`}>{i + 1}</div>
                <div className={`flex w-[99px] shrink-0 items-center border-r border-[#d4d4d4] pl-[3px] ${sel ? "bg-[#d2e7fc]" : ""}`}>{name}</div>
                <div className="flex w-[383px] shrink-0 items-center whitespace-nowrap border-r border-[#d4d4d4] pl-[3px]">{desc}</div>
                {sel && <span className="absolute -bottom-px left-[15px] right-0 top-0 border-2 border-[#707070]" />}
              </div>
            );
          })}
          <div className="absolute right-[3px] top-[13px] h-[71px] w-[8px] rounded-[4px] bg-[#c9c9c9]" />
        </div>
        <div className="flex shrink-0 justify-end px-[12px] pt-[7px]">
          <div className="flex h-[26px] w-[80px] items-center justify-center rounded-[3px] bg-[#2e7fdf] text-white">重新校核</div>
        </div>
        <div className="mx-[12px] mt-[6px] border-t border-[#cfcfcf]" />
      </div>

      {/* section editor dialog */}
      <div className="absolute left-[1145px] top-[330px] flex h-[504px] w-[504px] flex-col bg-[#cdd1d5] px-[2px] pb-[1px]">
        <div className="-mx-[2px] flex h-[27px] shrink-0 items-center justify-between bg-[#2e7fdf] pl-[8px] pr-[9px] text-white">
          截面编辑
          <span className="text-[13px]">✕</span>
        </div>
        <div className="flex h-[34px] shrink-0 items-center whitespace-nowrap bg-white pl-[2px] text-[#444]">
          <div className="flex h-[22px] w-[37px] shrink-0 items-center justify-center rounded-[3px] border border-[#7db3e8] bg-[#cfe3f7] text-[#2f6fc4]">选择</div>
          <div className="ml-[2px] h-[26px] border-l border-[#cfcfcf]" />
          <span className="ml-[5px] flex h-[13px] w-[13px] shrink-0 items-center justify-center rounded-full border border-[#999]"><span className="h-[7px] w-[7px] rounded-full bg-[#5a9be0]" /></span>
          <span className="ml-[8px] w-[39px] shrink-0">纵筋</span>
          <span className="h-[13px] w-[13px] shrink-0 rounded-full border border-[#999]" />
          <span className="ml-[9px] w-[26px] shrink-0">箍筋</span>
          <div className="h-[26px] border-l border-[#cfcfcf]" />
          <span className="ml-[9px] shrink-0">直线</span>
          <span className="ml-[5px]"><Caret /></span>
          <span className="ml-[9px] shrink-0">显示标注</span>
          <span className="ml-[14px] shrink-0 text-[#b5b5b5]">删除</span>
          <span className="ml-[13px] shrink-0">清空钢筋</span>
          <div className="ml-[9px] h-[26px] border-l border-[#cfcfcf]" />
          <span className="ml-[9px] shrink-0">布角筋</span>
          <span className="ml-[13px] shrink-0">布边筋</span>
          <span className="ml-[32px] shrink-0 text-[8px] text-[#666]">▸▸</span>
        </div>
        <div className="relative min-h-0 flex-1 overflow-hidden bg-black">
          <SectionDrawing />
          <div className="absolute left-[3px] top-[3px] flex h-[38px] w-[206px] items-center bg-[#dfe3e6] pl-[9px]">
            钢筋信息:
            <div className="ml-[7px] flex h-[25px] w-[134px] items-center justify-between border-2 border-[#c9c9c9] bg-white pl-[5px] text-[#555]">
              44C14
              <span className="flex h-full w-[14px] items-center justify-center border-l border-[#d0d0d0]"><Caret /></span>
            </div>
          </div>
        </div>
        <div className="flex h-[30px] shrink-0 items-center gap-[6px] bg-[#dfe2e5] pl-[2px]">
          <div className="flex h-[24px] w-[25px] items-center justify-center border border-[#aeb2b6] bg-[#d2d5d8]"><Ico n="l1" /></div>
          <div className="flex h-[24px] w-[25px] items-center justify-center border border-[#4d9be8] bg-white"><Ico n="l2" /></div>
          <div className="flex h-[24px] w-[25px] items-center justify-center border border-[#4d9be8] bg-white"><Ico n="l3" /></div>
          <div className="flex h-[24px] w-[25px] items-center justify-center border border-[#aeb2b6] bg-[#d2d5d8]"><Ico n="l4" /></div>
          <span className="ml-[1px] whitespace-pre text-[#555]">(X: -447 Y: 464)  选择钢筋进行编辑，选择标注进行修改或移动;</span>
        </div>
      </div>
    </div>
  );
}
